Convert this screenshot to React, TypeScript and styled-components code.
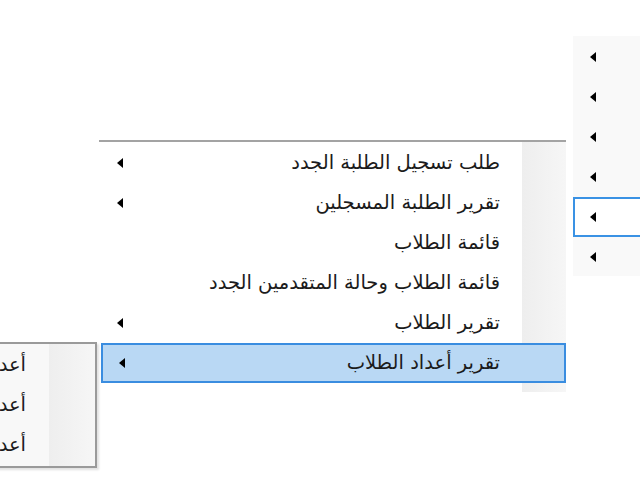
import { FC } from "react";
import styled, { createGlobalStyle } from "styled-components";

const GlobalStyle = createGlobalStyle`
  html, body {
    margin: 0;
    padding: 0;
    background: #ffffff;
    overflow: hidden;
  }
`;

type MenuItem = { label: string; sub?: boolean; active?: boolean; focused?: boolean };

const topMenu: MenuItem[] = [
  { label: "", sub: true },
  { label: "", sub: true },
  { label: "", sub: true },
  { label: "", sub: true },
  { label: "", sub: true, focused: true },
  { label: "", sub: true },
];

const studentsMenu: MenuItem[] = [
  { label: "طلب تسجيل الطلبة الجدد", sub: true },
  { label: "تقرير الطلبة المسجلين", sub: true },
  { label: "قائمة الطلاب" },
  { label: "قائمة الطلاب وحالة المتقدمين الجدد" },
  { label: "تقرير الطلاب", sub: true },
  { label: "تقرير أعداد الطلاب", sub: true, active: true },
];

const countsMenu: MenuItem[] = [
  { label: "أعداد الطلاب حسب الكلية" },
  { label: "أعداد الطلاب حسب الجنسية" },
  { label: "أعداد الطلاب حسب الحالة" },
];

const App: FC = () => {
  return (
    <>
      <GlobalStyle />
      <S.Desktop>
        <S.Menu $left={573} $top={36} $width={120} $height={240} $variant="plain">
          <S.List $padRight={40} $padLeft={17}>
            {topMenu.map((item, i) => (
              <S.Item key={i} $active={item.active} $focused={item.focused}>
                <S.Label>{item.label}</S.Label>
                {item.sub && <S.Arrow />}
              </S.Item>
            ))}
          </S.List>
        </S.Menu>

        <S.Menu $left={99} $top={140} $width={467} $height={252} $variant="topline">
          <S.Gutter $width={44} />
          <S.List $padRight={64} $padLeft={18}>
            {studentsMenu.map((item, i) => (
              <S.Item key={i} $active={item.active} $focused={item.focused}>
                <S.Label>{item.label}</S.Label>
                {item.sub && <S.Arrow />}
              </S.Item>
            ))}
          </S.List>
        </S.Menu>

        <S.Menu $left={-253} $top={342} $width={350} $height={126} $variant="boxed">
          <S.Gutter $width={46} />
          <S.List $padRight={67} $padLeft={18}>
            {countsMenu.map((item, i) => (
              <S.Item key={i}>
                <S.Label>{item.label}</S.Label>
                {item.sub && <S.Arrow />}
              </S.Item>
            ))}
          </S.List>
        </S.Menu>
      </S.Desktop>
    </>
  );
};

export default App;

const S = {
  Desktop: styled.div`
    position: relative;
    width: 640px;
    height: 480px;
    overflow: hidden;
    background: #ffffff;
    direction: rtl;
    font-family: "DejaVu Sans", "Noto Sans", sans-serif;
    font-size: 19.5px;
    color: #1b1b1b;
  `,
  Menu: styled.div<{
    $left: number;
    $top: number;
    $width: number;
    $height: number;
    $variant: "plain" | "topline" | "boxed";
  }>`
    position: absolute;
    left: ${p => p.$left}px;
    top: ${p => p.$top}px;
    width: ${p => p.$width}px;
    height: ${p => p.$height}px;
    box-sizing: border-box;
    background: ${p => (p.$variant === "plain" ? "#f9f9f9" : p.$variant === "boxed" ? "#f8f8f8" : "#ffffff")};
    border-top: ${p => (p.$variant === "topline" ? "2px solid #a3a3a3" : "none")};
    border: ${p => (p.$variant === "boxed" ? "2px solid #9a9a9a" : undefined)};
    box-shadow: ${p => (p.$variant === "boxed" ? "2px 2px 2px rgba(0,0,0,0.12)" : "none")};
    overflow: hidden;
  `,
  Gutter: styled.div<{ $width: number }>`
    position: absolute;
    top: 0;
    bottom: 0;
    right: 0;
    width: ${p => p.$width}px;
    background: linear-gradient(to right, #eeeeee, #f6f6f6);
  `,
  List: styled.div<{ $padRight: number; $padLeft: number }>`
    position: relative;
    display: flex;
    flex-direction: column;
    padding-top: 1px;
    --pad-right: ${p => p.$padRight}px;
    --pad-left: ${p => p.$padLeft}px;
  `,
  Item: styled.div<{ $active?: boolean; $focused?: boolean }>`
    display: flex;
    align-items: center;
    height: 40px;
    box-sizing: border-box;
    padding: 0 var(--pad-right) 0 var(--pad-left);
    margin-left: ${p => (p.$active ? "2px" : "0")};
    border: 2px solid ${p => (p.$active ? "#3a8de0" : p.$focused ? "#3a92e4" : "transparent")};
    background: ${p => (p.$active ? "#b9d8f4" : p.$focused ? "#ffffff" : "transparent")};
    white-space: nowrap;
  `,
  Label: styled.span`
    flex: 1;
    text-align: right;
    line-height: 26px;
  `,
  Arrow: styled.span`
    width: 0;
    height: 0;
    border-top: 5px solid transparent;
    border-bottom: 5px solid transparent;
    border-right: 6px solid #000000;
    margin-left: -2px;
  `,
};
